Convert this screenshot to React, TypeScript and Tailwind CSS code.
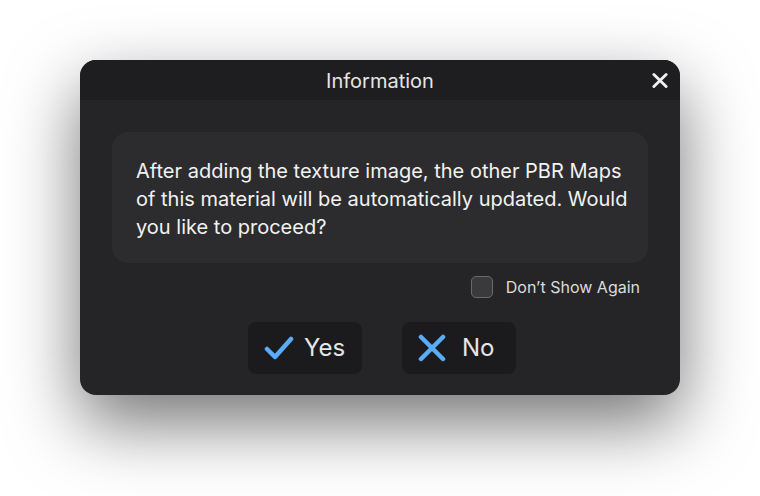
import React from "react";

export default function App() {
  return (
    <div
      className="w-[760px] h-[496px] bg-white flex justify-center pt-[60px]"
      style={{ fontFamily: "Inter, 'Noto Sans', sans-serif" }}
    >
      <div className="w-[600px] h-[335px] rounded-[16px] bg-[#252527] overflow-hidden flex flex-col shadow-[0_28px_70px_rgba(0,0,0,0.55)]">
        <div className="relative h-[40px] bg-[#1e1e20] flex items-center justify-center pt-[1px]">
          <span className="text-[20px] text-[#e6e6e6]">Information</span>
          <button className="absolute right-[12px] top-[12px] w-[16px] h-[16px] flex items-center justify-center">
            <svg width="17" height="17" viewBox="0 0 17 17">
              <path d="M2 2 L15 15 M15 2 L2 15" stroke="#f0f0f0" strokeWidth="3" strokeLinecap="round" />
            </svg>
          </button>
        </div>
        <div className="flex flex-col px-[32px] pt-[32px]">
          <div className="h-[131px] rounded-[16px] bg-[#2c2c2e] pl-[24px] pr-[14px] pt-[25px]">
            <p className="text-[20px] leading-[28px] text-[#f2f2f2]">
              After adding the texture image, the other PBR Maps of this material will be automatically updated. Would you like to proceed?
            </p>
          </div>
          <div className="flex items-center justify-end gap-[13px] mt-[12px] pr-[8px]">
            <div className="w-[22px] h-[22px] rounded-[5px] border-[1.5px] border-[#6a6a6c] bg-[#3a3a3c]" />
            <span className="text-[16px] text-[#dcdcdc]">Don’t Show Again</span>
          </div>
          <div className="flex justify-center gap-[40px] mt-[23px] pl-[4px]">
            <button className="w-[114px] h-[52px] rounded-[8px] bg-[#1b1b1d] flex items-center pl-[16px] gap-[10px]">
              <svg width="30" height="26" viewBox="0 0 30 26">
                <path d="M3 14 L11 22 L27 4" stroke="#5aacfa" strokeWidth="4.5" fill="none" strokeLinecap="round" strokeLinejoin="round" />
              </svg>
              <span className="text-[24px] text-[#e6e6e6]">Yes</span>
            </button>
            <button className="w-[114px] h-[52px] rounded-[8px] bg-[#1b1b1d] flex items-center pl-[16px] gap-[16px]">
              <svg width="28" height="28" viewBox="0 0 28 28">
                <path d="M3 3 L25 25 M25 3 L3 25" stroke="#5aacfa" strokeWidth="4.5" fill="none" strokeLinecap="round" />
              </svg>
              <span className="text-[24px] text-[#e6e6e6]">No</span>
            </button>
          </div>
        </div>
      </div>
    </div>
  );
}
